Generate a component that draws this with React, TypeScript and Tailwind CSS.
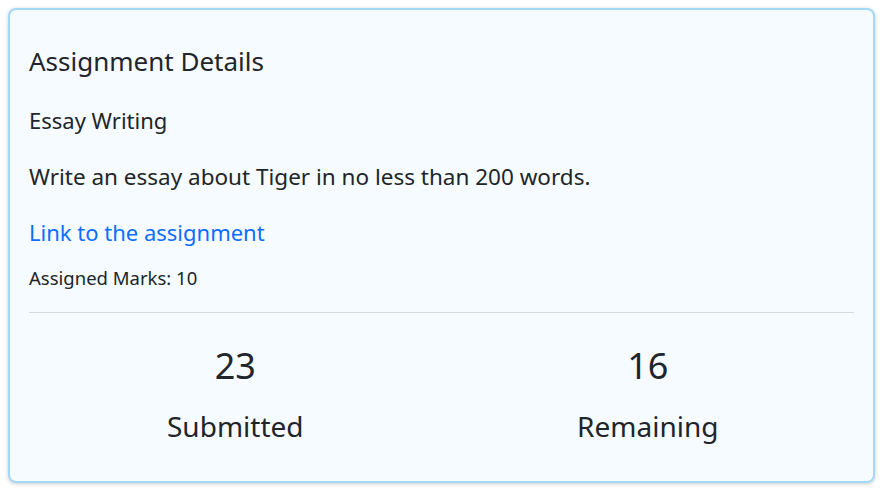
export default function App() {
  return (
    <div className="min-h-screen bg-white p-2 font-['Noto_Sans',sans-serif] text-[#212529]">
      <div className="rounded-lg border-2 border-[#a3d9f5] bg-[#f5fbff] px-[19px] pb-[37px] pt-[36px] shadow-[0_1px_4px_rgba(0,0,0,0.2)]">
        {/* Details */}
        <h4 className="text-[26px] leading-[1.2]">Assignment Details</h4>
        <p className="mt-[30px] text-[22px] leading-[1.2]">Essay Writing</p>
        <p className="mt-[29px] text-[22.5px] leading-[1.2]">
          Write an essay about Tiger in no less than 200 words.
        </p>
        <a className="mt-[29px] block text-[22px] leading-[1.2] text-[#0d6efd]" href="#0">
          Link to the assignment
        </a>
        <p className="mt-[22px] text-[18.5px] leading-[1.2]">Assigned Marks: 10</p>
        <hr className="mt-[23px] border-t border-[#d6dadd]" />

        {/* Stats */}
        <div className="mt-[31px] grid grid-cols-2 text-center">
          <div>
            <div className="text-[36px] leading-[1.2]">23</div>
            <div className="mt-[23px] text-[28px] leading-[1.2]">Submitted</div>
          </div>
          <div>
            <div className="text-[36px] leading-[1.2]">16</div>
            <div className="mt-[23px] text-[28px] leading-[1.2]">Remaining</div>
          </div>
        </div>
      </div>
    </div>
  );
}
